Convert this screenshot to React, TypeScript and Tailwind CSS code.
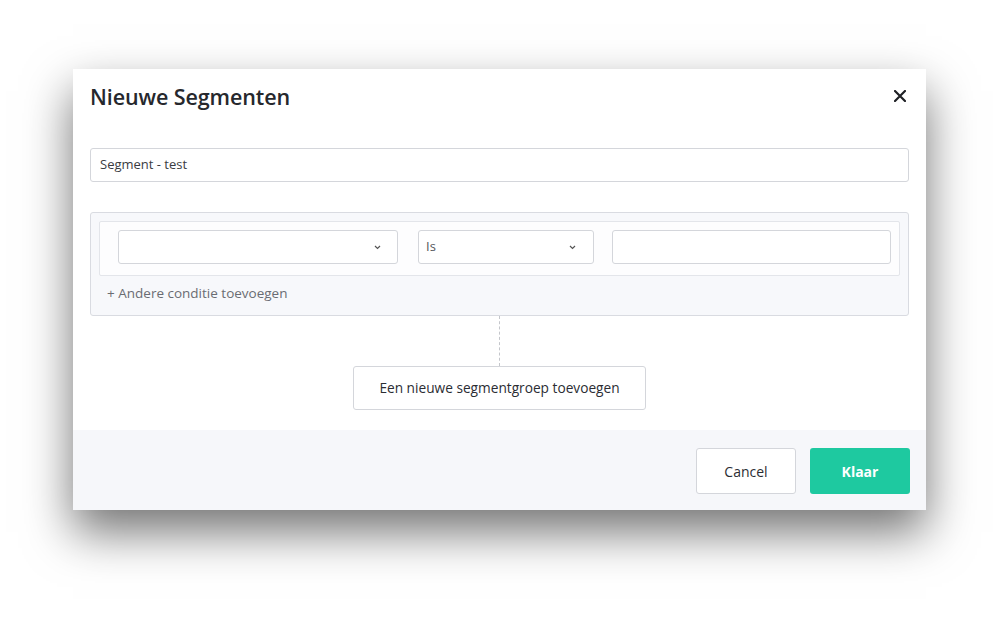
import React from 'react';

function Chevron() {
  return (
    <svg width="7" height="5" viewBox="0 0 7 5" className="text-[#555]">
      <path d="M1 1l2.5 2.5L6 1" fill="none" stroke="currentColor" strokeWidth="1.2" />
    </svg>
  );
}

export default function App() {
  return (
    <div className="min-h-[620px] bg-white pt-[69px] pl-[73px] font-['Open_Sans',sans-serif] text-[#2b2d33]">
      <div className="w-[853px] bg-white shadow-[0_22px_45px_rgba(0,0,0,0.55)]">
        {/* Header */}
        <div className="px-[17px] pt-[14px]">
          <div className="flex items-center justify-between h-[28px]">
            <h2 className="text-[21.5px] font-semibold tracking-[-0.1px] text-[#26282d]">Nieuwe Segmenten</h2>
            <svg width="12" height="12" viewBox="0 0 12 12" className="mr-[3px] mt-[-2px]">
              <path d="M1 1l10 10M11 1L1 11" stroke="#1f2125" strokeWidth="2.2" strokeLinecap="round" />
            </svg>
          </div>

          <div className="mt-[37px] h-[34px] border border-[#d4d6db] rounded-[3px] flex items-center px-[9px] text-[13px] text-[#3a3c42]">
            Segment - test
          </div>

          {/* Group */}
          <div className="mt-[30px] border border-[#d9dbe1] rounded-[3px] bg-[#f7f8fb] p-[8px] pb-[12px]">
            <div className="border border-[#e3e5ea] rounded-[2px] bg-[#fdfdfe] pl-[18px] pr-[8px] pt-[8px] pb-[11px] flex items-center">
              <div className="w-[280px] h-[34px] border border-[#d4d6db] rounded-[3px] bg-white flex items-center justify-end pr-[16px]">
                <Chevron />
              </div>
              <div className="ml-[20px] w-[176px] h-[34px] border border-[#d4d6db] rounded-[3px] bg-white flex items-center justify-between pl-[7px] pr-[17px] text-[13px] text-[#55575c]">
                <span>Is</span>
                <Chevron />
              </div>
              <div className="ml-[18px] flex-1 h-[34px] border border-[#d4d6db] rounded-[3px] bg-white" />
            </div>
            <div className="mt-[7px] pl-[8px] h-[20px] flex items-center text-[13.5px] text-[#6a6c72]">
              + Andere conditie toevoegen
            </div>
          </div>

          {/* Connector */}
          <div className="flex flex-col items-center">
            <div className="h-[50px] border-l border-dashed border-[#c4c6cb]" />
            <button className="w-[293px] h-[44px] border border-[#d4d6db] rounded-[3px] bg-white text-[13.7px] font-medium text-[#2b2d33]">
              Een nieuwe segmentgroep toevoegen
            </button>
          </div>
        </div>

        {/* Footer */}
        <div className="mt-[20px] bg-[#f6f7fa] h-[80px] flex items-start justify-end gap-[14px] pt-[18px] pr-[16px]">
          <button className="w-[100px] h-[46px] border border-[#d4d6db] rounded-[3px] bg-white text-[14px] font-medium text-[#2b2d33]">
            Cancel
          </button>
          <button className="w-[100px] h-[46px] rounded-[3px] bg-[#1ec9a0] text-[14px] font-bold text-white">
            Klaar
          </button>
        </div>
      </div>
    </div>
  );
}
